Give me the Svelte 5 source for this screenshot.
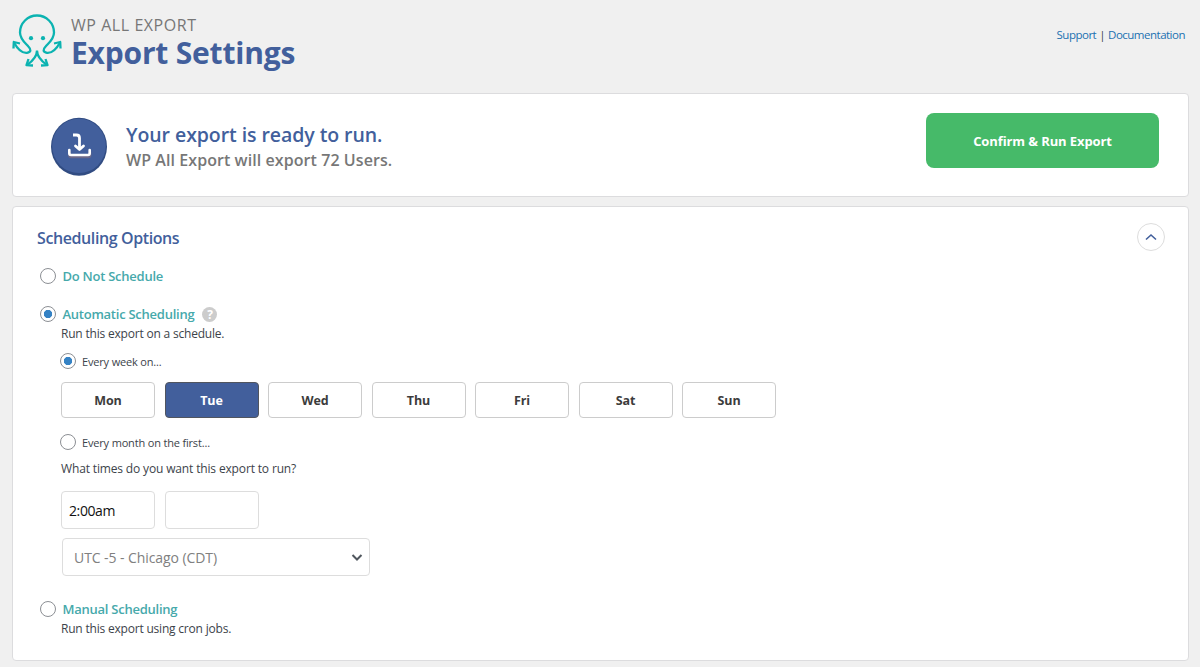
<script>
  let schedule = $state('auto');
  let frequency = $state('week');
  let day = $state('Tue');
  let open = $state(true);
  let times = $state(['2:00am', '']);

  const days = ['Mon', 'Tue', 'Wed', 'Thu', 'Fri', 'Sat', 'Sun'];
</script>

<header>
  <svg class="logo" viewBox="0 0 50 54" width="50" height="54">
    <g fill="none" stroke="#0bb3b1" stroke-width="2.3" stroke-linejoin="round">
      <path d="M2 28.500C5.500 35 10 39.300 15 38.800c4.200-.6 4.300-3.300 1.400-6.300C12.500 28.200 8 25 8 18.500a17 17 0 0 1 34 0C42 25 37.500 28.200 33.600 32.500c-2.900 3-2.800 5.700 1.400 6.300C40 39.300 44.500 35 48 28.500" />
      <path d="M25 36.500C25 43.500 20 47.500 15 51M25 36.500C25 43.500 30 47.500 35 51" />
      <path d="M1.500 34.500L1.800 28L8 29.500M48.500 34.500L48.200 28L42 29.500" />
      <path d="M16.500 45L14.500 51.200L21 51.500M33.500 45L35.500 51.200L29 51.500" />
    </g>
    <circle cx="19" cy="24.200" r="2.100" fill="#0bb3b1" />
    <circle cx="31" cy="24.200" r="2.100" fill="#0bb3b1" />
  </svg>
  <div class="brand">
    <div class="product">WP ALL EXPORT</div>
    <h1>Export Settings</h1>
  </div>
  <nav><a href="#support">Support</a><span class="sep">|</span><a href="#docs">Documentation</a></nav>
</header>

<section class="panel ready">
  <svg class="badge" viewBox="0 0 58 60" width="58" height="60">
    <ellipse cx="29" cy="29.700" rx="28" ry="29" fill="#314c82" />
    <ellipse cx="29" cy="28.900" rx="26.800" ry="27.200" fill="#425f9c" />
    <g fill="none" stroke-linecap="round" stroke-linejoin="round">
      <path d="M19.500 35v3.500q0 1.500 1.500 1.500h17.500q1.500 0 1.500-1.500V35" stroke="#6c6988" stroke-width="2.600" />
      <path d="M19.300 33v3.300q0 1.700 1.700 1.700h17q1.700 0 1.700-1.700V33" stroke="#fff" stroke-width="2.600" />
      <path d="M23 18h3.500q3 0 3 3v10" stroke="#fff" stroke-width="2.800" stroke-linecap="butt" />
      <path d="M25.500 29l4 3.500l4-3.500" stroke="#fff" stroke-width="2.800" />
    </g>
  </svg>
  <div class="summary">
    <h2>Your export is ready to run.</h2>
    <p>WP All Export will export 72 Users.</p>
  </div>
  <button class="run">Confirm &amp; Run Export</button>
</section>

<section class="panel options">
  <div class="head">
    <h3>Scheduling Options</h3>
    <button class="toggle" aria-label="Toggle scheduling options" onclick={() => (open = !open)}>
      <svg viewBox="0 0 12 8" width="12" height="8"><path d="M1 6.500L6 2L11 6.500" fill="none" stroke="#425f9c" stroke-width="1.600" /></svg>
    </button>
  </div>

  {#if open}
    <label class="choice none">
      <input type="radio" value="none" bind:group={schedule} />
      <span>Do Not Schedule</span>
    </label>

    <label class="choice auto">
      <input type="radio" value="auto" bind:group={schedule} />
      <span>Automatic Scheduling</span>
      <i class="help">?</i>
    </label>
    <div class="sub">
      <p class="desc">Run this export on a schedule.</p>

      <label class="freq week">
        <input type="radio" value="week" bind:group={frequency} />
        <span>Every week on...</span>
      </label>
      <div class="days">
        {#each days as d}
          <button class:active={d === day} onclick={() => (day = d)}>{d}</button>
        {/each}
      </div>

      <label class="freq month">
        <input type="radio" value="month" bind:group={frequency} />
        <span>Every month on the first...</span>
      </label>
      <p class="question">What times do you want this export to run?</p>
      <div class="times">
        {#each times as _, i}
          <input type="text" bind:value={times[i]} />
        {/each}
      </div>
      <div class="zone">
        <span>UTC -5 - Chicago (CDT)</span>
        <svg viewBox="0 0 12 8" width="12" height="8"><path d="M1.500 2L6 6.500L10.500 2" fill="none" stroke="#50575e" stroke-width="2" /></svg>
      </div>
    </div>

    <label class="choice manual">
      <input type="radio" value="manual" bind:group={schedule} />
      <span>Manual Scheduling</span>
    </label>
    <div class="sub">
      <p class="desc">Run this export using cron jobs.</p>
    </div>
  {/if}
</section>

<style>
  :global(body) {
    background: #f0f0f0;
    color: #3c434a;
    font-family: 'Open Sans', 'Noto Sans', sans-serif;
    font-size: 12px;
  }
  h1, h2, h3, p { margin: 0; }
  h1, h2, h3, .product, p, span, a { white-space: nowrap; }
  button, input { font-family: inherit; box-sizing: border-box; }
  button { cursor: pointer; }

  header { display: flex; height: 93px; padding: 0 15px 0 12px; box-sizing: border-box; }
  .logo { margin-top: 14px; }
  .brand { margin: 15px 0 0 9px; }
  .product { font-size: 16px; line-height: 21px; color: #777; letter-spacing: .55px; }
  h1 { font-size: 30px; line-height: 34px; font-weight: 700; color: #425f9c; letter-spacing: -.2px; }
  nav { display: flex; gap: 3px; margin: 25px 0 0 auto; line-height: 20px; font-size: 11.500px; letter-spacing: -.5px; }
  a { color: #2271b1; text-decoration: none; }
  .sep { color: #3c434a; }

  .panel { margin: 0 11px 0 12px; box-sizing: border-box; background: #fff; border: 1px solid #dcdcde; border-radius: 4px; }
  .ready { display: flex; height: 104px; padding: 0 29px 0 37px; }
  .badge { margin-top: 23px; }
  .summary { margin: 27px 0 0 18px; }
  h2 { font-size: 19.500px; line-height: 28px; font-weight: 600; color: #425f9c; letter-spacing: -.07px; }
  .summary p { font-size: 16px; line-height: 23px; font-weight: 600; color: #777; letter-spacing: .07px; }
  .run { width: 233px; height: 55px; margin: 19px 0 0 auto; border: 0; border-radius: 8px; background: #46ba69; color: #fff; font-size: 13px; font-weight: 700; letter-spacing: -.1px; }

  .options { height: 455px; margin-top: 9px; padding: 16px 23px 0 24px; }
  .head { display: flex; align-items: center; justify-content: space-between; height: 28px; }
  h3 { padding-top: 2px; font-size: 16px; line-height: 28px; font-weight: 600; color: #425f9c; letter-spacing: -.4px; }
  .toggle { display: flex; align-items: center; justify-content: center; width: 28px; height: 28px; padding: 0; border: 1.500px solid #ddd; border-radius: 50%; background: #fff; }

  .choice, .freq { display: flex; align-items: center; height: 20px; }
  .choice { margin-left: 3px; color: #46a9ab; font-size: 13px; font-weight: 600; letter-spacing: -.25px; }
  .choice span { margin-left: 6.500px; }
  .none { margin-top: 15px; }
  .auto { margin-top: 18px; }
  .manual { margin-top: 23px; }
  input[type='radio'] { appearance: none; flex: none; width: 16px; height: 16px; margin: 0; border: 1px solid #8c8f94; border-radius: 50%; background: #fff; }
  input[type='radio']:checked { background: radial-gradient(circle, #3582c4 3.800px, #fff 4.500px); }
  .help { width: 15px; height: 15px; margin-left: 8px; border-radius: 50%; background: #ccc; color: #fff; font-size: 12px; line-height: 15px; font-style: normal; font-weight: 700; text-align: center; }

  .sub { margin-left: 24px; }
  .desc { line-height: 19px; letter-spacing: -.2px; }
  .freq { margin-left: -1px; font-size: 11px; letter-spacing: -.17px; }
  .freq span { margin-left: 6px; }
  .week { margin-top: 8px; }
  .month { margin-top: 14px; }
  .days, .times { display: flex; gap: 9.500px; }
  .days { margin-top: 11px; }
  .days button { width: 94px; height: 36px; padding: 1px 0 0; border: 1px solid #ccc; border-radius: 4px; background: #fff; color: #3c3c3c; font-size: 12.500px; font-weight: 700; letter-spacing: -.1px; }
  .days .active { border-color: #51555f; background: #425f9c; color: #fff; }
  .question { margin-top: 7px; line-height: 20px; letter-spacing: -.15px; }
  .times { margin-top: 12px; }
  .times input { width: 94px; height: 38px; padding: 0 7px; border: 1px solid #ddd; border-radius: 4px; color: #111; font-size: 14px; letter-spacing: -.4px; }
  .zone { display: flex; align-items: center; justify-content: space-between; box-sizing: border-box; width: 308px; height: 38px; margin: 9px 0 0 1px; padding: 0 6px 0 11px; border: 1px solid #ddd; border-radius: 4px; color: #808080; font-size: 14px; letter-spacing: -.08px; }
</style>
